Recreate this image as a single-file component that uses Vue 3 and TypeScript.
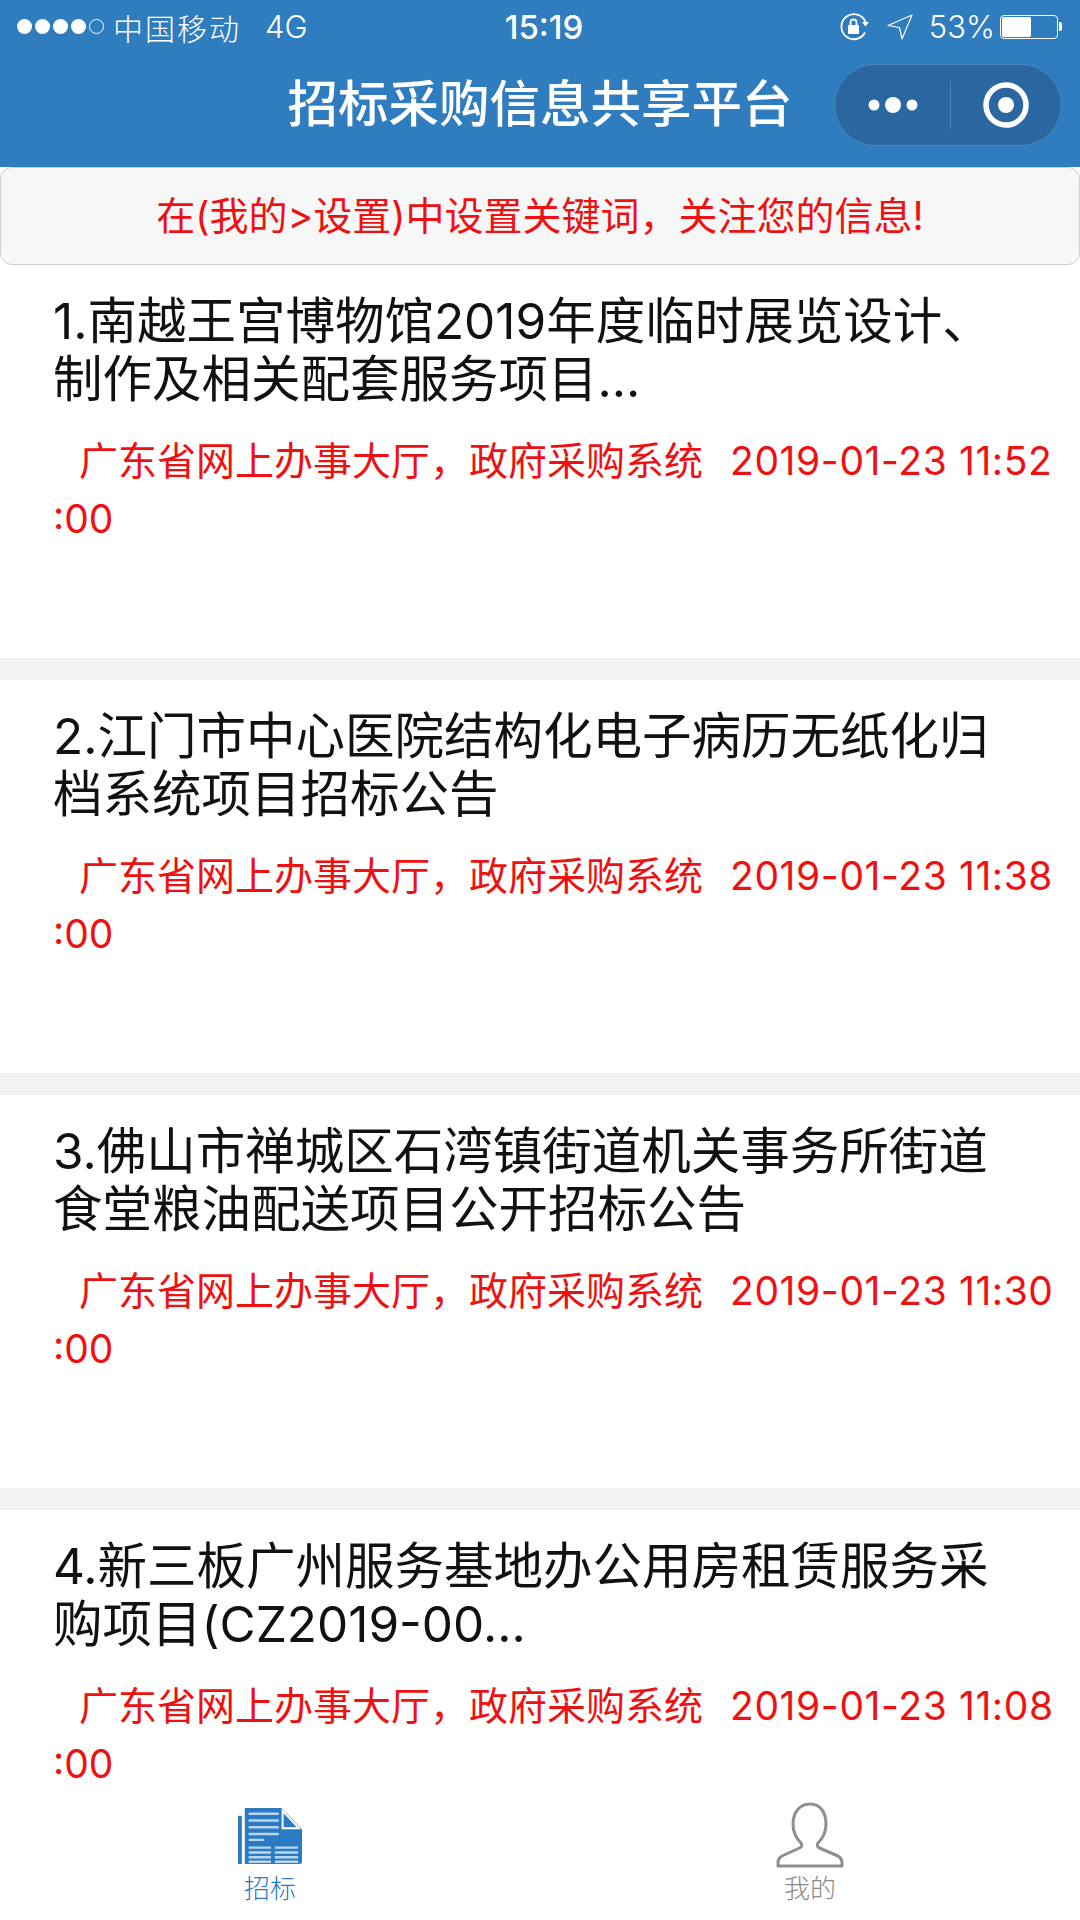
<script setup lang="ts">
interface Notice {
  title: string
  time: string
}
const notices: Notice[] = [
  { title: '1.南越王宫博物馆2019年度临时展览设计、制作及相关配套服务项目...', time: '2019-01-23 11:52:00' },
  { title: '2.江门市中心医院结构化电子病历无纸化归档系统项目招标公告', time: '2019-01-23 11:38:00' },
  { title: '3.佛山市禅城区石湾镇街道机关事务所街道食堂粮油配送项目公开招标公告', time: '2019-01-23 11:30:00' },
  { title: '4.新三板广州服务基地办公用房租赁服务采购项目(CZ2019-00...', time: '2019-01-23 11:08:00' },
]
const source = '广东省网上办事大厅，政府采购系统'
</script>

<template>
  <div class="page">
    <header class="header">
      <div class="status">
        <div class="status-left">
          <span class="signal">
            <i v-for="n in 4" :key="n" class="dot"></i>
            <i class="dot hollow"></i>
          </span>
          <span class="carrier">中国移动</span>
          <span class="net">4G</span>
        </div>
        <div class="clock">15:19</div>
        <div class="status-right">
          <svg class="rot" width="32" height="30" viewBox="0 0 32 30" fill="none">
            <path d="M26 20.500A12.500 12.500 0 1 1 26.500 10" stroke="#fff" stroke-width="1.800" />
            <path d="M23 10h7l-3.500 4.500z" fill="#fff" />
            <rect x="9" y="13" width="11" height="9" rx="1" fill="#fff" />
            <path d="M11.500 13v-2.500a3 3 0 0 1 6 0V13" stroke="#fff" stroke-width="1.800" />
          </svg>
          <svg class="arrow" width="28" height="28" viewBox="0 0 28 28" fill="none">
            <path d="M26 2 2 12.500l11.500 2 2.500 11.500z" stroke="#fff" stroke-width="1.200" stroke-linejoin="round" />
          </svg>
          <span class="pct">53%</span>
          <span class="battery"><span class="charge" :style="{ width: '53%' }"></span></span>
          <span class="nub"></span>
        </div>
      </div>
      <div class="nav">
        <h1 class="nav-title">招标采购信息共享平台</h1>
        <div class="capsule">
          <div class="capsule-side dots">
            <svg width="54" height="20" viewBox="0 0 54 20"><circle cx="7" cy="10" r="5.500" fill="#fff" /><circle cx="26" cy="10" r="8" fill="#fff" /><circle cx="45" cy="10" r="5.500" fill="#fff" /></svg>
          </div>
          <span class="capsule-line"></span>
          <div class="capsule-side">
            <svg width="48" height="48" viewBox="0 0 48 48" fill="none"><circle cx="24" cy="24" r="20" stroke="#fff" stroke-width="5.500" /><circle cx="24" cy="24" r="8" fill="#fff" /></svg>
          </div>
        </div>
      </div>
    </header>

    <div class="banner">在(我的&gt;设置)中设置关键词，关注您的信息!</div>

    <main class="list">
      <article v-for="item in notices" :key="item.title" class="card">
        <h2 class="card-title">{{ item.title }}</h2>
        <p class="card-meta"><span class="source">{{ source }}</span><span class="time">{{ item.time.slice(0, -3) }}</span><wbr /><span class="secs">{{ item.time.slice(-3) }}</span></p>
      </article>
    </main>

    <nav class="tabbar">
      <div class="tab active">
        <svg class="tab-icon doc" width="64" height="58" viewBox="0 0 66 58">
          <rect x="0" y="8" width="4" height="50" rx="1" fill="#2a7ac4" />
          <path d="M7 0h38l21 22v33a3 3 0 0 1-3 3H7z" fill="#2a7ac4" />
          <path d="M46 3 63 21H46z" fill="#2a7ac4" stroke="#fff" stroke-width="2" />
          <g stroke="#b9d6ee" stroke-width="2.500">
            <path d="M11 6h31M11 13h31M11 20h31M11 27h31M11 33h16" />
            <path d="M11 41h23M38 41h24M11 46h23M38 46h24M11 51h23M38 51h24M11 55.500h23M38 55.500h24" />
          </g>
        </svg>
        <span class="tab-label">招标</span>
      </div>
      <div class="tab">
        <svg class="tab-icon user" width="68" height="66" viewBox="0 0 68 66" fill="none">
          <path d="M34 2c-10 0-17 8-17 20 0 9 4 15 8 19 1.500 2 .5 4-1.500 5L6 54c-2.500 1.500-4 3.500-4 6v4h64v-4c0-2.500-1.500-4.500-4-6l-18.500-8c-2-1-3-3-1.500-5 4-4 8-10 8-19C50 10 44 2 34 2z" stroke="#8f8f8f" stroke-width="3" stroke-linejoin="round" />
        </svg>
        <span class="tab-label">我的</span>
      </div>
    </nav>
  </div>
</template>

<style scoped>
.page {
  width: 1080px;
  height: 1920px;
  display: flex;
  flex-direction: column;
  overflow: hidden;
  background: #fff;
  font-family: Inter, "Noto Sans CJK SC", "Liberation Sans", sans-serif;
}
.header {
  height: 167px;
  flex: none;
  background: #2f7cbe;
  color: #fff;
  display: flex;
  flex-direction: column;
}
.status {
  height: 53px;
  display: grid;
  grid-template-columns: 1fr auto 1fr;
  align-items: center;
  font-size: 30px;
}
.status-left {
  display: flex;
  align-items: center;
  padding-left: 17px;
}
.signal {
  display: flex;
  gap: 3px;
  margin-right: 9px;
}
.dot {
  width: 15px;
  height: 15px;
  border-radius: 50%;
  background: #fff;
  box-sizing: border-box;
}
.dot.hollow {
  background: none;
  border: 1px solid #fff;
}
.carrier {
  font-weight: 300;
  letter-spacing: 2px;
}
.net {
  margin-left: 24px;
  font-size: 31px;
  font-weight: 300;
}
.clock {
  font-size: 33px;
  font-weight: 500;
  padding-left: 8px;
}
.status-right {
  display: flex;
  align-items: center;
  justify-content: flex-end;
  padding-right: 18px;
}
.rot {
  margin-right: 15px;
}
.arrow {
  margin-right: 15px;
}
.pct {
  font-size: 31px;
  font-weight: 300;
  margin-right: 5px;
}
.battery {
  width: 58px;
  height: 24px;
  box-sizing: border-box;
  border: 1px solid #fff;
  border-radius: 4px;
  padding: 1px;
  display: block;
}
.charge {
  display: block;
  height: 100%;
  background: #fff;
  border-radius: 2px;
}
.nub {
  width: 3px;
  height: 9px;
  margin-left: 1px;
  background: #fff;
  border-radius: 0 2px 2px 0;
}
.nav {
  flex: 1;
  position: relative;
  display: flex;
  align-items: center;
  justify-content: center;
  padding-bottom: 12px;
}
.nav-title {
  margin: 0;
  font-size: 50.500px;
  font-weight: 500;
  line-height: 60px;
}
.capsule {
  position: absolute;
  left: 834px;
  top: 11px;
  width: 228px;
  height: 82px;
  box-sizing: border-box;
  border: 1px solid #4a86bb;
  border-radius: 41px;
  background: #2a67a1;
  display: flex;
  align-items: center;
}
.capsule-side {
  flex: 1;
  display: flex;
  align-items: center;
  justify-content: center;
}
.capsule-side.dots {
  padding-left: 4px;
}
.capsule-line {
  width: 1px;
  height: 48px;
  background: #4a86bb;
}
.banner {
  height: 98px;
  flex: none;
  box-sizing: border-box;
  border: 1px solid #cfcfcf;
  border-radius: 12px;
  background: #f7f7f7;
  color: #ee1111;
  font-size: 39px;
  line-height: 96px;
  text-align: center;
}
.list {
  flex: 1;
  min-height: 0;
  overflow: hidden;
}
.card {
  height: 393px;
  box-sizing: border-box;
  padding: 27px 0 0 53px;
  margin-bottom: 22px;
  position: relative;
}
.card::after {
  content: "";
  position: absolute;
  left: 0;
  right: 0;
  bottom: -22px;
  height: 22px;
  background: #f2f2f2;
}
.card-title {
  margin: 0;
  width: 976px;
  font-size: 49.500px;
  font-weight: 400;
  line-height: 58px;
  color: #111;
  word-break: break-all;
}
.card-meta {
  margin: 24px 0 0;
  width: 1010px;
  font-size: 39px;
  line-height: 58px;
  color: #ee1111;
  text-indent: 26px;
}
.time {
  margin-left: 27px;
  white-space: nowrap;
  letter-spacing: 0.600px;
}
.secs {
  white-space: nowrap;
}
.tabbar {
  height: 125px;
  flex: none;
  display: flex;
  background: #fff;
}
.tab {
  flex: 1;
  display: flex;
  flex-direction: column;
  align-items: center;
  color: #8a8a8a;
}
.tab.active {
  color: #2a7ac4;
}
.tab-icon {
  display: block;
}
.doc {
  margin-top: 12px;
}
.tab.active .tab-label {
  margin-top: 7px;
}
.user {
  margin-top: 7px;
}
.tab-label {
  font-size: 26px;
  font-weight: 300;
  line-height: 34px;
  margin-top: 4px;
}
</style>

<style>
html, body {
  margin: 0;
  background: #fff;
}
</style>
